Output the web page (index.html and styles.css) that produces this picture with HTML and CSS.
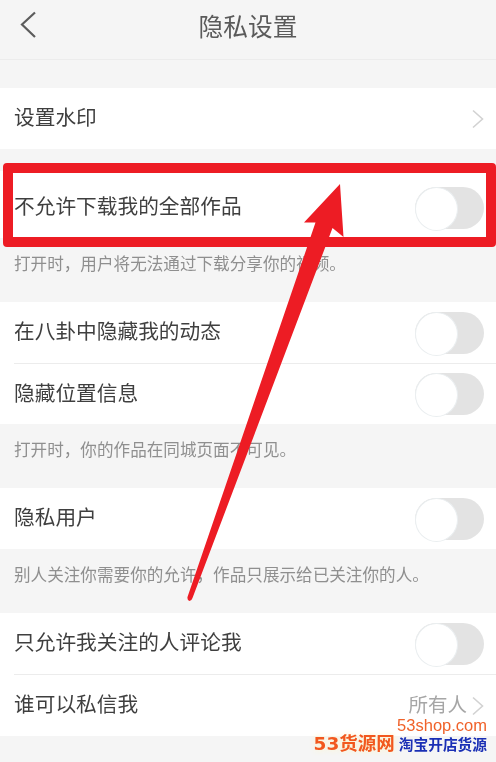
FILE: index.html
```html
<!DOCTYPE html>
<html lang="zh-CN">
<head>
<meta charset="utf-8">
<title>隐私设置</title>
<link rel="stylesheet" href="styles.css">
</head>
<body>
<div class="page">
  <header class="topbar">
    <svg class="back" width="22" height="30" viewBox="0 0 22 30" aria-hidden="true"><path d="M16 1.500 3 13.500 16 26" fill="none" stroke="#5c5c5c" stroke-width="2.200"/></svg>
    <h1 class="title">隐私设置</h1>
  </header>

  <section class="group first">
    <div class="row"><div class="row-inner">
      <span class="label">设置水印</span>
      <svg class="chev" width="12" height="20" viewBox="0 0 12 20" aria-hidden="true"><path d="M1 1.500 10.500 10 1 18.500" fill="none" stroke="#d2d2d2" stroke-width="1.600"/></svg>
    </div></div>
  </section>

  <section class="group boxed">
    <div class="row"><div class="row-inner">
      <span class="label">不允许下载我的全部作品</span>
      <span class="toggle"></span>
    </div></div>
  </section>
  <p class="note">打开时，用户将无法通过下载分享你的视频。</p>

  <section class="group">
    <div class="row"><div class="row-inner">
      <span class="label">在八卦中隐藏我的动态</span>
      <span class="toggle"></span>
    </div></div>
    <div class="row"><div class="row-inner lined">
      <span class="label">隐藏位置信息</span>
      <span class="toggle"></span>
    </div></div>
  </section>
  <p class="note">打开时，你的作品在同城页面不可见。</p>

  <section class="group">
    <div class="row"><div class="row-inner">
      <span class="label">隐私用户</span>
      <span class="toggle"></span>
    </div></div>
  </section>
  <p class="note">别人关注你需要你的允许，作品只展示给已关注你的人。</p>

  <section class="group">
    <div class="row"><div class="row-inner">
      <span class="label">只允许我关注的人评论我</span>
      <span class="toggle"></span>
    </div></div>
    <div class="row tall"><div class="row-inner lined">
      <span class="label">谁可以私信我</span>
      <span class="value"><span class="value-text">所有人</span><svg class="chev" width="12" height="20" viewBox="0 0 12 20" aria-hidden="true"><path d="M1 1.500 10.500 10 1 18.500" fill="none" stroke="#d2d2d2" stroke-width="1.600"/></svg></span>
    </div></div>
  </section>

  <div class="redbox"></div>
  <svg class="arrow" width="496" height="762" viewBox="0 0 496 762" aria-hidden="true">
    <path d="M340 184 304 222.500 315.500 222.500 187.500 597Q187 600.500 189.500 601 191.500 601 192.500 598L332.500 228 343.500 237Z" fill="#ed1c24"/>
  </svg>
  <div class="watermark">
    <div class="wm-url">53shop.com</div>
    <div class="wm-line"><span class="wm-brand">53货源网</span><span class="wm-slogan">淘宝开店货源</span></div>
  </div>
</div>
</body>
</html>
```
FILE: styles.css
```css
* { box-sizing: border-box; }
html, body { margin: 0; padding: 0; }
body {
  background: #f5f5f5;
  font-family: "Noto Sans CJK SC", "Noto Sans", sans-serif;
  color: #3f3f3f;
}
.page {
  position: relative;
  width: 496px;
  height: 762px;
  overflow: hidden;
  background: #f5f5f5;
  filter: blur(0.35px);
}
.topbar {
  position: relative;
  height: 60px;
  border-bottom: 1px solid #ececec;
  display: flex;
  align-items: center;
  justify-content: center;
}
.back { position: absolute; left: 19px; top: 11px; }
.title {
  margin: 0 0 9px;
  font-size: 24.700px;
  font-weight: 400;
  color: #5a5a5a;
  line-height: 34px;
}
.group { background: #fff; }
.group.first { margin-top: 28px; }
.group.boxed { margin-top: 22px; padding-top: 6px; }
.row { height: 61px; padding-left: 14px; }
.row.tall { height: 62px; }
.row-inner {
  height: 100%;
  display: flex;
  align-items: center;
  justify-content: space-between;
  padding-right: 12px;
}
.row-inner.lined { border-top: 1px solid #ececec; }
.label {
  margin-bottom: 5px;
  font-size: 20.700px;
  line-height: 30px;
  color: #3f3f3f;
}
.toggle {
  position: relative;
  display: block;
  width: 69px;
  height: 42px;
  border-radius: 21px;
  background: #e3e3e3;
}
.toggle::before {
  content: "";
  position: absolute;
  left: 0;
  top: 0;
  width: 41px;
  height: 42px;
  border-radius: 50%;
  background: #fff;
  border: 1px solid #eaeef0;
}
.chev { display: block; }
.value {
  display: flex;
  align-items: center;
  gap: 5px;
  font-size: 19.500px;
  line-height: 30px;
  color: #a6a6a6;
}
.value-text { margin-bottom: 4px; }
.note {
  margin: 0;
  height: 64px;
  padding: 13px 14px 0;
  font-size: 16.600px;
  line-height: 24px;
  color: #8f8f8f;
  white-space: nowrap;
}
.redbox {
  position: absolute;
  left: 3px;
  top: 163px;
  width: 493px;
  height: 84px;
  border: 10px solid #ed1c24;
  border-radius: 4px;
}
.arrow { position: absolute; left: 0; top: 0; }
.watermark {
  position: absolute;
  right: 9px;
  top: 716px;
  width: 190px;
}
.wm-url {
  font-family: "Liberation Sans", Arial, sans-serif;
  font-size: 16.500px;
  line-height: 18px;
  color: #f0622a;
  text-align: right;
}
.wm-line {
  display: flex;
  justify-content: flex-end;
  align-items: center;
  gap: 4px;
  line-height: 20px;
}
.wm-brand {
  font-family: "DejaVu Sans", "Noto Sans CJK SC", sans-serif;
  font-size: 18.500px;
  font-weight: 700;
  color: #f2581e;
  text-shadow: 0 0 6px #fff6c8;
}
.wm-slogan {
  font-size: 14.700px;
  font-weight: 700;
  color: #1a2fb5;
}
```
